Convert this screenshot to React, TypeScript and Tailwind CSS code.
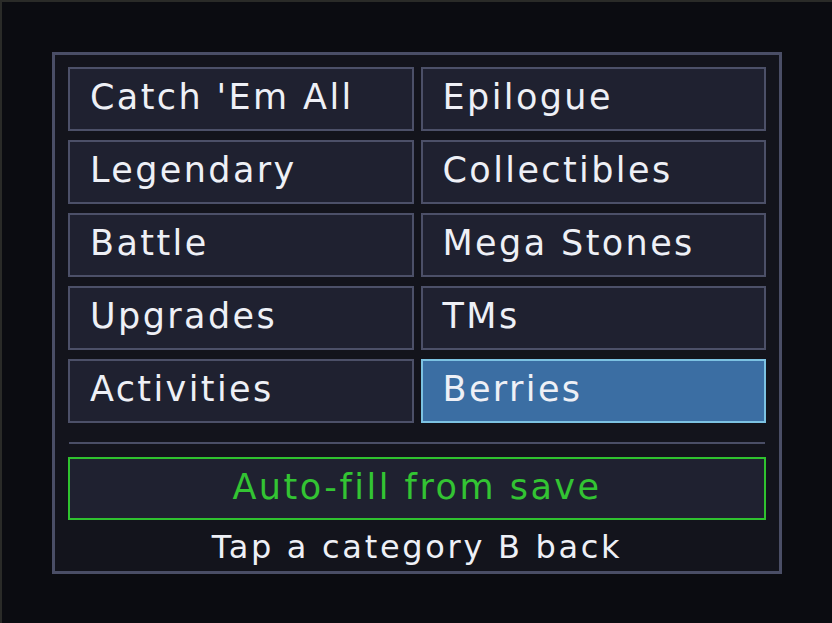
const categories = [
  'Catch \'Em All',
  'Epilogue',
  'Legendary',
  'Collectibles',
  'Battle',
  'Mega Stones',
  'Upgrades',
  'TMs',
  'Activities',
  'Berries',
];

const selected = 'Berries';

function CategoryButton({ label, active }: { label: string; active: boolean }) {
  return (
    <button
      className={
        active
          ? 'flex h-[64px] items-center border-2 border-[#7cc2e2] bg-[#3b6ea3] pb-[3px] pl-[20px] text-left text-[35px] tracking-[2.4px] text-[#eef0f6]'
          : 'flex h-[64px] items-center border-2 border-[#4c5068] bg-[#1f2130] pb-[3px] pl-[20px] text-left text-[35px] tracking-[2.4px] text-[#eef0f6]'
      }
    >
      {label}
    </button>
  );
}

export default function App() {
  return (
    <div
      className="h-[623px] w-[832px] border-l-2 border-t-2 border-[#2a2b28] bg-[#0b0c11] pl-[50px] pt-[50px]"
      style={{ fontFamily: '"DejaVu Sans", sans-serif' }}
    >
      <div className="flex h-[522px] w-[730px] flex-col border-[3px] border-[#4a4e66] bg-[#13141c] px-[13px] pt-[12px]">
        <div className="grid grid-cols-2 gap-x-[7px] gap-y-[9px]">
          {categories.map((c) => (
            <CategoryButton key={c} label={c} active={c === selected} />
          ))}
        </div>

        <div className="mx-px mt-[19px] h-[2px] bg-[#4a4e66]" />

        <button className="mt-[13px] flex h-[64px] items-center justify-center border-2 border-[#2fc22f] bg-[#1f2130] pb-[3px] text-[35px] tracking-[2.5px] text-[#33c433]">
          Auto-fill from save
        </button>

        <p className="mt-[3px] text-center text-[32px] tracking-[2.7px] text-[#eef0f6]">
          Tap a category B back
        </p>
      </div>
    </div>
  );
}
